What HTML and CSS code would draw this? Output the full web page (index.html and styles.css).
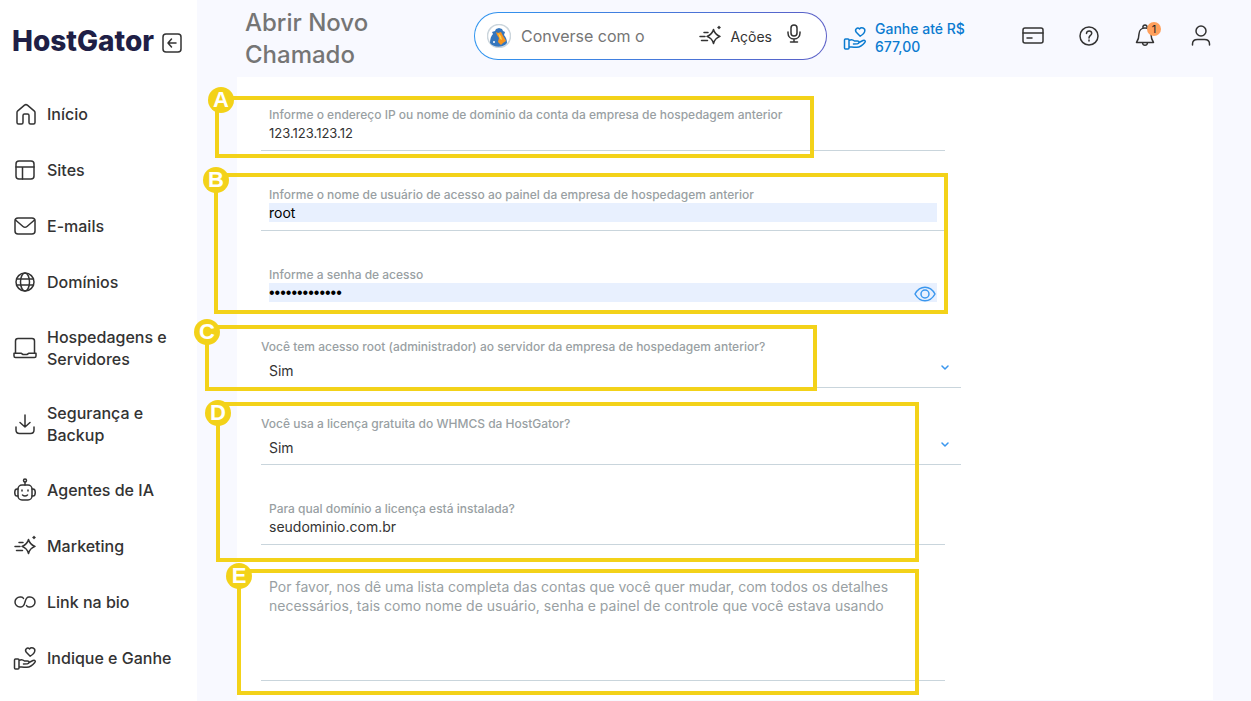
FILE: index.html
```html
<!DOCTYPE html>
<html lang="pt-BR">
  <head>
    <meta charset="UTF-8" />
    <meta name="viewport" content="width=device-width, initial-scale=1.0" />
    <link rel="stylesheet" href="styles.css">
    <title>Abrir Novo Chamado</title>
  </head>
  <body>
    <!-- shared icons -->
    <svg class="sprite">
      <symbol id="spark" viewBox="0 0 24 24">
        <path d="M15.5 5.5c.9 3.600 2.400 5.300 6.500 6.900-4.100 1.600-5.600 3.300-6.500 7.100-.9-3.800-2.400-5.500-6.500-7.100 4.100-1.600 5.600-3.300 6.500-6.900zM6 8.500h4M2 12.500h5M3.500 16.500h6M21 2.500v2M20 3.500h2" />
      </symbol>
      <symbol id="hand" viewBox="0 0 24 24">
        <path d="M2.500 13H5c.6 0 1 .4 1 1v8c0 .6-.4 1-1 1H2.500c-.6 0-1-.4-1-1v-8c0-.6.4-1 1-1zM6 14.500c2-1.300 4-.8 5.500.5h3c2 0 2 2.500 0 2.700l-4 .2M16 16.500l4-2c1.800-.8 3 .6 1.800 1.900-2.300 2.800-4.800 4.700-8 4.900-3 .2-5.500-.5-7.800-.6M17.200 10.200l-3.900-4c-2-2.600.9-5.400 3.300-3.300 1.700-2.300 5.700-.8 5.200 2.100-.3 2.300-2.500 3.900-4.600 5.200z" />
      </symbol>
    </svg>
    <div class="container">
      <aside class="sidebar">
        <div class="brand">
          <a class="logo" href="#home">HostGator</a>
          <button class="collapse" type="button" aria-label="Recolher menu">
            <svg class="icon-small" viewBox="0 0 20 20"><rect x="1" y="1" width="18" height="18" rx="3" /><path d="M14 10H6M9.500 6L6 10l3.500 4" /></svg>
          </button>
        </div>
        <nav class="menu">
          <a href="#inicio">
            <svg class="icon" viewBox="0 0 24 24"><path d="M4 10.500c0-.7.300-1.200.8-1.700l6.700-5.600c.9-.7 2-.7 2.900 0l6.700 5.600c.5.500.9 1 .9 1.700v10c0 .9-.7 1.500-1.500 1.500h-3c-.8 0-1.500-.6-1.500-1.500V13.500c0-.9-.6-1.500-1.500-1.500h-3c-.9 0-1.500.6-1.500 1.500v7c0 .9-.7 1.500-1.500 1.500h-3c-.8 0-1.500-.6-1.500-1.500z" /></svg>
            <span>Início</span>
          </a>
          <a href="#sites">
            <svg class="icon" viewBox="0 0 24 24"><rect x="3" y="3" width="18" height="18" rx="3" /><path d="M3 9h18M9.500 9v12" /></svg>
            <span>Sites</span>
          </a>
          <a href="#emails">
            <svg class="icon" viewBox="0 0 24 24"><rect x="2" y="4" width="20" height="16" rx="3" /><path d="M2.500 6l7.500 6.500c1.200 1 2.800 1 4 0L21.500 6" /></svg>
            <span>E-mails</span>
          </a>
          <a href="#dominios">
            <svg class="icon" viewBox="0 0 24 24"><circle cx="12" cy="12" r="9" /><ellipse cx="12" cy="12" rx="4.500" ry="9" /><path d="M3.500 9h17M3.500 15h17" /></svg>
            <span>Domínios</span>
          </a>
          <a href="#hospedagens">
            <svg class="icon" viewBox="0 0 24 24"><path d="M2.500 17V5c0-1.700.8-2.500 2.500-2.500h14c1.700 0 2.500.8 2.500 2.500v12M1 17.200h7l2 1.300h4l2-1.300h7v2.800c0 1-.6 1.500-1.500 1.500h-19c-.9 0-1.500-.5-1.500-1.500z" /></svg>
            <span>Hospedagens e Servidores</span>
          </a>
          <a href="#seguranca">
            <svg class="icon" viewBox="0 0 24 24"><path d="M12 3v12M7 10.500l5 4.500 5-4.500M3 15v3c0 2 1.500 3.500 3.500 3.500h11c2 0 3.500-1.500 3.500-3.500v-3" /></svg>
            <span>Segurança e Backup</span>
          </a>
          <a href="#agentes">
            <svg class="icon" viewBox="0 0 24 24"><circle cx="12" cy="2.500" r="1.500" /><rect x="5" y="7" width="14" height="15" rx="4" /><path d="M12 4v3M5 11H4c-3 0-3 7 0 7h1M19 11h1c3 0 3 7 0 7h-1M9 12v1M15 12v1M9.500 17c1.500 1.200 3.500 1.200 5 0" /></svg>
            <span>Agentes de IA</span>
          </a>
          <a href="#marketing">
            <svg class="icon"><use href="#spark" /></svg>
            <span>Marketing</span>
          </a>
          <a href="#link">
            <svg class="icon" viewBox="0 0 24 24"><path d="M10.500 8.500C10 7.300 9 7 8 7H7a5 5 0 0 0 0 10h1c3 0 3.500-3 4-5s1.500-5 4-5h1a5 5 0 0 1 0 10h-1c-1 0-2-.3-2.500-1.500" /></svg>
            <span>Link na bio</span>
          </a>
          <a href="#indique">
            <svg class="icon"><use href="#hand" /></svg>
            <span>Indique e Ganhe</span>
          </a>
        </nav>
      </aside>

      <main class="main">
        <header class="header">
          <h1>Abrir Novo Chamado</h1>
          <div class="search">
            <svg class="avatar" viewBox="0 0 24 24">
              <circle cx="12" cy="12" r="11.500" fill="#fff" stroke="#cbd5dc" />
              <path d="M3 19c0-4 1-7 3-9l-1-2 3-1 1-2 3-1 3 1 1 2 2 1-1 3c2 2 3 5 3 8-4 5-13 5-17 0z" fill="#3576bd" />
              <path d="M9 8l2 1 3-1 2 4 2 3 1 2-3 2-2 2-3-3 1-4-2-3z" fill="#f7941e" />
              <path d="M11 9l3 3 1 4-2-1z" fill="#ffd34d" />
              <circle cx="7" cy="18" r="1" fill="#fff" />
            </svg>
            <input type="text" placeholder="Converse com o" aria-label="Converse com o assistente">
            <button class="actions" type="button">
              <svg class="icon"><use href="#spark" /></svg>
              Ações
            </button>
            <button class="mic" type="button" aria-label="Falar">
              <svg class="icon-small" viewBox="0 0 20 20"><rect x="7" y="1" width="6" height="11" rx="3" /><path d="M4 8v1c0 3.500 2.500 6 6 6s6-2.500 6-6V8M10 15v3M6.500 18h7" /></svg>
            </button>
          </div>
          <a class="promo" href="#ganhe">
            <svg class="icon"><use href="#hand" /></svg>
            <span>Ganhe até R$ 677,00</span>
          </a>
          <div class="tools">
            <button type="button" aria-label="Pagamentos">
              <svg class="icon" viewBox="0 0 24 24"><rect x="2" y="4" width="20" height="15" rx="2" /><path d="M2 9h20M6 14h5" /></svg>
            </button>
            <button type="button" aria-label="Ajuda">
              <svg class="icon" viewBox="0 0 24 24"><circle cx="12" cy="12" r="9" /><path d="M9.500 9.500c0-3.500 5.500-3.200 5.200 0-.2 2-2.700 1.900-2.700 4.500M12 16v1" /></svg>
            </button>
            <button type="button" aria-label="Notificações">
              <svg class="icon" viewBox="0 0 24 24"><path d="M10 4c-1-4 5-4 4 0M3.500 18.500c2-3 2.500-5 2.500-8.500 0-3.500 2.500-6 6-6s6 2.500 6 6c0 3.500.5 5.500 2.500 8.500zM9.500 19c.5 3 4.500 3 5 0" /></svg>
              <span class="count">1</span>
            </button>
            <button type="button" aria-label="Conta">
              <svg class="icon" viewBox="0 0 24 24"><circle cx="12" cy="7" r="5" /><path d="M3.500 21v-1c0-3 2-4.500 5-4.500h7c3 0 5 1.500 5 4.500v1" /></svg>
            </button>
          </div>
        </header>

        <div class="panel">
          <form class="form">
            <section class="group">
              <div class="field">
                <label for="host">Informe o endereço IP ou nome de domínio da conta da empresa de hospedagem anterior</label>
                <input type="text" id="host" class="numeric" value="123.123.123.12">
              </div>
              <div class="marker marker-a"><span>A</span></div>
            </section>

            <section class="group">
              <div class="field">
                <label for="user">Informe o nome de usuário de acesso ao painel da empresa de hospedagem anterior</label>
                <input type="text" id="user" class="filled" value="root">
              </div>
              <div class="field">
                <label for="password">Informe a senha de acesso</label>
                <input type="password" id="password" class="filled" value="senha12345678">
                <button class="eye" type="button" aria-label="Mostrar senha">
                  <svg viewBox="0 0 22 16"><path d="M1 8c5-9 15-9 20 0-5 9-15 9-20 0z" /><circle cx="11" cy="8" r="4" /></svg>
                </button>
              </div>
              <div class="marker marker-b"><span>B</span></div>
            </section>

            <section class="group">
              <div class="choice">
                <label for="root">Você tem acesso root (administrador) ao servidor da empresa de hospedagem anterior?</label>
                <select id="root"><option>Sim</option><option>Não</option></select>
                <svg class="arrow" viewBox="0 0 8 5"><path d="M1 1l3 3 3-3" /></svg>
              </div>
              <div class="marker marker-c"><span>C</span></div>
            </section>

            <section class="group">
              <div class="choice">
                <label for="whmcs">Você usa a licença gratuita do WHMCS da HostGator?</label>
                <select id="whmcs"><option>Sim</option><option>Não</option></select>
                <svg class="arrow" viewBox="0 0 8 5"><path d="M1 1l3 3 3-3" /></svg>
              </div>
              <div class="field">
                <label for="domain">Para qual domínio a licença está instalada?</label>
                <input type="text" id="domain" value="seudominio.com.br">
              </div>
              <div class="marker marker-d"><span>D</span></div>
            </section>

            <section class="group">
              <div class="field message">
                <textarea aria-label="Lista de contas" placeholder="Por favor, nos dê uma lista completa das contas que você quer mudar, com todos os detalhes necessários, tais como nome de usuário, senha e painel de controle que você estava usando"></textarea>
              </div>
              <div class="marker marker-e"><span>E</span></div>
            </section>
          </form>
        </div>
      </main>
    </div>
  </body>
</html>
```
FILE: styles.css
```css
* {
  box-sizing: border-box;
}

body {
  margin: 0;
  background-color: #f8f9ff;
  color: #333;
  font-family: Inter, "Liberation Sans", sans-serif;
}

a {
  color: inherit;
  text-decoration: none;
}

button {
  padding: 0;
  border: 0;
  background: none;
  color: inherit;
  font-family: inherit;
  cursor: pointer;
}

input,
select,
textarea {
  padding: 0;
  border: 0;
  outline: 0;
  background: none;
  color: #333;
  font-family: inherit;
}

svg {
  display: block;
  flex: none;
  fill: none;
  stroke: currentColor;
  stroke-width: 1.5;
  stroke-linecap: round;
  stroke-linejoin: round;
}

.sprite {
  display: none;
}

.icon {
  width: 24px;
  height: 24px;
}

.icon-small {
  width: 20px;
  height: 20px;
}

.container {
  display: flex;
  min-height: 100vh;
}

/* sidebar */
.sidebar {
  flex: none;
  width: 197px;
  background-color: #fff;
}

.brand {
  display: flex;
  align-items: center;
  justify-content: space-between;
  height: 86px;
  padding: 0 15px 0 12px;
}

.logo {
  padding-bottom: 4px;
  color: #1f1f46;
  font-size: 28px;
  font-weight: 800;
}

.menu a {
  display: flex;
  align-items: center;
  gap: 10px;
  padding: 16px 13px;
  font-size: 16px;
  font-weight: 500;
  line-height: 22px;
}

/* header */
.main {
  flex: 1;
  display: flex;
  flex-direction: column;
  min-width: 0;
}

.header {
  display: flex;
  align-items: center;
  height: 77px;
  padding: 0 38px 5px 48px;
}

.header h1 {
  width: 150px;
  margin: 6px 79px 0 0;
  color: #757575;
  font-size: 24px;
  font-weight: 500;
  line-height: 32px;
}

.search {
  flex: 1;
  display: flex;
  align-items: center;
  min-width: 0;
  height: 48px;
  padding: 0 22px 0 12px;
  border: 1px solid transparent;
  border-radius: 24px;
  background: linear-gradient(#fff, #fff) padding-box, linear-gradient(90deg, #2f95f0, #5b5fc7) border-box;
}

.search input {
  flex: 1;
  min-width: 0;
  margin-left: 10px;
  font-size: 16px;
}

.search input::placeholder {
  color: #757575;
}

.avatar {
  width: 24px;
  height: 24px;
  stroke: none;
}

.actions {
  display: flex;
  align-items: center;
  gap: 8px;
  font-size: 14px;
}

.mic {
  margin-left: 12px;
  padding-bottom: 4px;
}

.promo {
  display: flex;
  align-items: center;
  gap: 8px;
  width: 146px;
  padding-top: 4px;
  margin: 0 32px 0 16px;
  color: #0b7bd0;
  font-size: 14px;
  font-weight: 500;
  line-height: 18px;
}

.promo span {
  width: 100px;
}

.tools {
  display: flex;
  gap: 32px;
}

.tools button {
  position: relative;
}

.count {
  position: absolute;
  top: -2px;
  right: -4px;
  width: 14px;
  height: 14px;
  border-radius: 50%;
  background-color: #ffa05c;
  color: #222;
  font-size: 11px;
  line-height: 14px;
}

/* form */
.panel {
  flex: 1;
  margin: 0 38px 1px 40px;
  padding: 18px 24px 19px;
  background-color: #fff;
}

.form {
  max-width: 700px;
}

.form,
.group {
  display: flex;
  flex-direction: column;
  gap: 24px;
}

.group {
  position: relative;
}

.field {
  position: relative;
  display: flex;
  flex-direction: column;
  margin-right: 16px;
  padding: 12px 8px 8px;
  border-bottom: 1px solid #c9d5dc;
}

.form label {
  color: #999fa3;
  font-size: 12px;
  font-weight: 500;
  line-height: 16px;
}

.field input {
  height: 19px;
  font-size: 14px;
}

.field .numeric {
  font-size: 13px;
}

.field .filled {
  background-color: #e8f0fe;
  color: #000;
}

.field input[type="password"] {
  font-family: "Liberation Sans", sans-serif;
  font-size: 16px;
}

.eye {
  position: absolute;
  right: 9px;
  bottom: 8px;
  color: #3b97ee;
}

.eye svg {
  width: 22px;
  height: 16px;
}

.choice {
  position: relative;
  display: flex;
  flex-direction: column;
  padding-top: 4px;
  border-bottom: 1px solid #c9d5dc;
}

.choice select {
  height: 32px;
  padding: 0 8px 2px;
  appearance: none;
  font-size: 14px;
}

.arrow {
  position: absolute;
  right: 12px;
  bottom: 17px;
  width: 8px;
  height: 5px;
  color: #3b97ee;
}

.message {
  padding: 8px 8px 0;
}

.message textarea {
  height: 103px;
  font-size: 14px;
  line-height: 19px;
  resize: none;
}

.message textarea::placeholder {
  color: #999fa3;
}

/* yellow frames drawn over the form */
.marker {
  position: absolute;
  border: 4px solid #f3d219;
  pointer-events: none;
}

.marker span {
  position: absolute;
  top: -10px;
  left: -15px;
  width: 26px;
  height: 26px;
  border-radius: 50%;
  background-color: #f3d219;
  color: #fff;
  font-family: "Liberation Sans", sans-serif;
  font-size: 22px;
  font-weight: bold;
  line-height: 26px;
  text-align: center;
}

.marker-a {
  inset: 1px 147px -7px -46px;
}

.marker-a span {
  top: -13px;
  left: -11px;
}

.marker-b {
  inset: -2px 13px -3px -47px;
}

.marker-c {
  inset: -10px 144px -3px -56px;
}

.marker-d {
  inset: -10px 42px -17px -45px;
}

.marker-d span {
  top: -6px;
}

.marker-e {
  inset: 0 42px -14px -24px;
}
```
